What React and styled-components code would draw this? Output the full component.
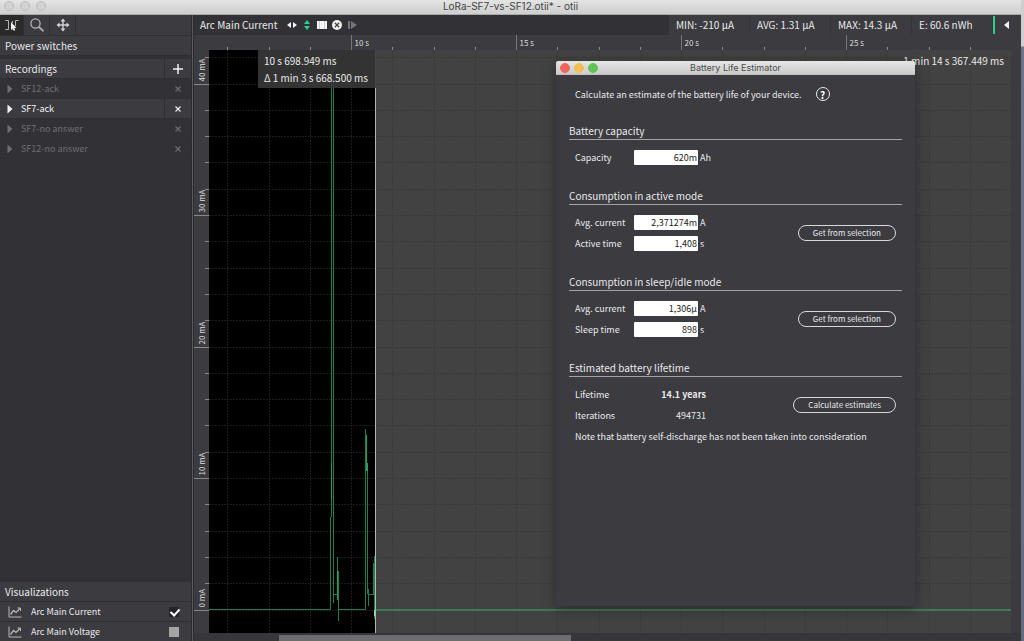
import React from "react";
import styled, { createGlobalStyle, css } from "styled-components";

const UI_FONT = `"Noto Sans CJK SC", "Noto Sans", sans-serif`;
const TITLE_FONT = `Inter, "Liberation Sans", sans-serif`;

const colors = {
  panel: "#3b3b40",
  dark: "#323236",
  divider: "#2f2f33",
  text: "#e9e9ea",
  muted: "#6e6e71",
  green: "#2ed285",
  trace: "#1b7f50",
};

const GlobalStyle = createGlobalStyle`
  * {
    box-sizing: border-box;
  }
  body {
    margin: 0;
    overflow: hidden;
    background: #6a7083;
    font-family: ${UI_FONT};
    font-size: 10px;
    color: ${colors.text};
  }
  button, input {
    font-family: inherit;
    font-size: inherit;
  }
  h2, h3, p {
    margin: 0;
    font-size: inherit;
    font-weight: 400;
  }
`;

const Desktop = styled.div`
  position: relative;
  height: 100vh;
  padding-right: 3px;
  background: linear-gradient(#cfcfcf 46px, #6c7488 47px, #666c80 100%);
`;

const Window = styled.div`
  height: 100%;
  display: flex;
  flex-direction: column;
  overflow: hidden;
  background: ${colors.panel};
`;

const TitleBar = styled.div`
  flex: none;
  height: 15px;
  display: grid;
  grid-template-columns: 1fr auto 1fr;
  align-items: center;
  padding: 0 4px 2px;
  background: linear-gradient(#e4e4e4, #cecece);
  border-bottom: 1px solid #a9a9a9;
  font-family: ${TITLE_FONT};
  font-size: 10px;
  line-height: 12px;
  color: #444;
`;

const Lights = styled.div`
  display: flex;
  gap: ${({ $gap }) => $gap}px;
`;

const Light = styled.span`
  width: 10px;
  height: 10px;
  border-radius: 50%;
  background: ${({ $color }) => $color};
  border: 1px solid ${({ $edge, $color }) => $edge || $color};
`;

const Columns = styled.div`
  flex: 1;
  min-height: 0;
  display: flex;
`;

/* ---------- sidebar ---------- */

const Sidebar = styled.aside`
  flex: none;
  width: 191px;
  display: flex;
  flex-direction: column;
  background: ${colors.dark};
`;

const Tools = styled.div`
  flex: none;
  display: flex;
  height: 21px;
  background: ${colors.panel};
  border-bottom: 1px solid ${colors.divider};
`;

const ToolButton = styled.button`
  width: ${({ $active }) => ($active ? 24 : 26)}px;
  padding: 0;
  border: 0;
  border-right: 1px solid ${colors.divider};
  display: flex;
  align-items: center;
  justify-content: center;
  color: #d4d4d6;
  background: ${({ $active }) => ($active ? "#2a2a2b" : "transparent")};
`;

const PanelHead = styled.div`
  flex: none;
  display: flex;
  align-items: center;
  height: 20px;
  padding-left: 5px;
  margin-bottom: ${({ $space }) => $space || 0}px;
  background: ${colors.panel};
  border-bottom: 1px solid ${colors.divider};

  h2 {
    flex: 1;
    line-height: 14px;
  }
`;

const SideButton = styled.button`
  align-self: stretch;
  width: 27px;
  padding: 0;
  border: 0;
  border-left: 1px solid ${({ $line }) => ($line ? colors.divider : "transparent")};
  display: flex;
  align-items: center;
  justify-content: center;
  color: inherit;
  background: none;
`;

const Recording = styled.div`
  flex: none;
  display: flex;
  align-items: center;
  height: 20px;
  padding-left: 7px;
  border-bottom: 1px solid #303034;
  color: ${colors.muted};
  font-size: 9px;

  span {
    flex: 1;
    padding-left: 8px;
    line-height: 14px;
  }

  ${({ $active }) =>
    $active &&
    css`
      color: #f4f4f4;
      background: ${colors.panel};
    `}
`;

const Spacer = styled.div`
  flex: 1;
`;

const Visualizations = styled.div`
  flex: none;
  height: 59px;
  overflow: hidden;
`;

const Visualization = styled.label`
  display: flex;
  align-items: center;
  height: 20px;
  padding: 0 12px 0 8px;
  background: ${colors.panel};
  border-bottom: 1px solid ${colors.divider};
  font-size: 9px;

  span {
    flex: 1;
    padding-left: 9px;
    line-height: 14px;
  }
`;

const Check = styled.input`
  appearance: none;
  width: 10px;
  height: 10px;
  margin: 0;
  background: #a5a5a5;

  &:checked {
    background: #242427;
  }
  &:checked::after {
    content: "";
    display: block;
    width: 4px;
    height: 7px;
    margin-left: 3px;
    border: solid #fff;
    border-width: 0 2px 2px 0;
    transform: rotate(42deg);
  }
`;

const Splitter = styled.div`
  flex: none;
  width: 3px;
  background: #5a5a5d;
  border-left: 1px solid #2c2c2f;
  border-right: 1px solid #2c2c2f;
`;

/* ---------- chart ---------- */

const Main = styled.main`
  flex: 1;
  min-width: 0;
  display: flex;
  flex-direction: column;
`;

const ChartHead = styled.div`
  flex: none;
  display: flex;
  align-items: stretch;
  height: 20px;
  background: ${colors.dark};
`;

const ChartTitle = styled.h2`
  align-self: center;
  padding: 0 9px 0 6px;
  line-height: 14px;
`;

const HeadIcons = styled.div`
  flex: 1;
  display: flex;
  align-items: center;
  gap: 3px;
`;

const IconButton = styled.button`
  width: 12px;
  height: 12px;
  padding: 0;
  border: 0;
  display: flex;
  background: none;
`;

const Stat = styled.div`
  flex: none;
  display: flex;
  align-items: center;
  width: 81px;
  padding-left: 7px;
  background: ${colors.panel};
  border-right: 1px solid #35353a;
  line-height: 14px;
  white-space: nowrap;
`;

const HeadEnd = styled.div`
  flex: none;
  width: 28px;
  display: flex;
  align-items: center;
  background: ${colors.panel};
`;

const Marker = styled.i`
  align-self: stretch;
  width: 2px;
  margin: 1px 8px 1px 0;
  background: ${colors.green};
`;

const ChartGrid = styled.div`
  flex: 1;
  min-height: 0;
  display: grid;
  grid-template: 15px 1fr / 15px 1fr 10px;
`;

const TimeAxis = styled.svg`
  grid-column: 2 / 4;
  width: 100%;
  height: 15px;
  display: block;
`;

const CurrentAxis = styled.svg`
  grid-column: 1;
  grid-row: 2;
  width: 15px;
  height: 100%;
  display: block;
`;

const Plot = styled.div`
  position: relative;
  grid-column: 2;
  grid-row: 2;
  min-height: 0;
  background: #424242;

  > svg {
    display: block;
    width: 100%;
    height: 100%;
  }
`;

const AxisText = styled.text`
  font-family: ${UI_FONT};
  font-size: 8px;
  fill: #dcdcdd;
`;

const Readout = styled.div`
  position: absolute;
  top: 0;
  left: 49px;
  width: 118px;
  padding: 2px 0 2px 6px;
  background: rgba(56, 56, 56, 0.9);
  line-height: 17px;
  white-space: nowrap;
`;

const TotalTime = styled.div`
  position: absolute;
  top: 2px;
  right: 7px;
  background: #424242;
  line-height: 17px;
`;

const ScrollTrack = styled.div`
  flex: none;
  height: 8px;
  padding: 2px 450px 0 85px;
  background: #37373b;
`;

const ScrollThumb = styled.div`
  height: 6px;
  background: #6d6d6e;
`;

/* ---------- estimator dialog ---------- */

const Dialog = styled.section`
  position: absolute;
  top: 61px;
  left: 556px;
  width: 359px;
  height: 545px;
  display: flex;
  flex-direction: column;
  background: #3b3b40;
  box-shadow: 0 3px 12px rgba(0, 0, 0, 0.35);
`;

const DialogBar = styled.div`
  flex: none;
  display: grid;
  grid-template-columns: 1fr auto 1fr;
  align-items: center;
  height: 14px;
  padding: 0 4px;
  background: linear-gradient(#e6e6e6, #cbcbcb);
  border-bottom: 1px solid #bdbdbd;
  border-radius: 2px 2px 0 0;
  font-family: ${TITLE_FONT};
  font-size: 9px;
  line-height: 12px;
  color: #4c4c4c;
`;

const DialogBody = styled.div`
  padding: 12px 13px;
`;

const Intro = styled.div`
  display: flex;
  align-items: center;
  gap: 14px;
  height: 14px;
  margin-bottom: 22px;
  padding-left: 6px;
  font-size: 9px;
`;

const HelpButton = styled.button`
  width: 14px;
  height: 14px;
  padding: 0;
  border: 1px solid #eee;
  border-radius: 50%;
  background: none;
  color: #fff;
  font-size: 10px;
  font-weight: 700;
  line-height: 11px;
`;

const Group = styled.div`
  margin-bottom: 23px;

  h3 {
    height: 17px;
    line-height: 16px;
    border-bottom: 1px solid #a2a2a4;
  }
`;

const GroupBody = styled.div`
  display: flex;
  align-items: center;
  justify-content: space-between;
  padding: 10px 6px 0;
`;

const Rows = styled.div`
  display: flex;
  flex-direction: column;
  gap: 6px;
  font-size: 9px;
`;

const Row = styled.div`
  display: flex;
  align-items: center;
  height: 15px;

  label, > span:first-child {
    width: 59px;
  }
`;

const NumberInput = styled.input`
  width: 64px;
  height: 15px;
  margin-right: 2px;
  padding: 0 1px;
  border: 0;
  border-radius: 1px;
  background: #fff;
  color: #1c1c1c;
  text-align: right;
`;

const Result = styled.output`
  width: 72px;
  text-align: right;
  font-weight: ${({ $bold }) => ($bold ? 700 : 400)};
`;

const Note = styled.p`
  padding: 6px 6px 0;
  font-size: 9px;
  line-height: 15px;
`;

const PillButton = styled.button`
  height: 16px;
  padding: 0 14px;
  border: 1px solid #d8d8da;
  border-radius: 8px;
  background: none;
  color: ${colors.text};
  font-size: 8px;
  line-height: 12px;
`;

const recordings = [
  { name: "SF12-ack" },
  { name: "SF7-ack", active: true },
  { name: "SF7-no answer" },
  { name: "SF12-no answer" },
];

const stats = ["MIN: -210 µA", "AVG: 1.31 µA", "MAX: 14.3 µA", "E: 60.6 nWh"];

// plot coordinates: 33px per second, 13.15px per mA
const timeX = (s) => Math.round(142 + (s - 10) * 33) + 0.5;
const currentY = (mA) => Math.round(559.5 - mA * 13.15) + 0.5;

const times = Array.from({ length: 19 }, (_, i) => 6.25 + i * 1.25);
const currents = Array.from({ length: 22 }, (_, i) => 42 - i * 2);
const SELECTION_END = 167;

const PlayTriangle = () => (
  <svg width="6" height="10" viewBox="0 0 6 10">
    <path d="M0.5 0.5 L5.5 5 L0.5 9.5 Z" fill="currentColor" />
  </svg>
);

const Cross = () => (
  <svg width="6" height="6" viewBox="0 0 6 6">
    <path d="M0.5 0.5 L5.5 5.5 M5.5 0.5 L0.5 5.5" stroke="currentColor" strokeWidth="1.1" />
  </svg>
);

const LineChartIcon = () => (
  <svg width="14" height="12" viewBox="0 0 14 12" fill="none" stroke="#b8b8ba">
    <path d="M1 0.5 V11 H13.5" strokeWidth="1" />
    <path d="M2.5 8.5 L5.5 4.5 L8 6.5 L12 2.5" strokeWidth="1.3" />
    <path d="M9.5 2 H12.5 V5" strokeWidth="1" />
  </svg>
);

const TimeRuler = () => (
  <TimeAxis>
    {times.map((t) => {
      const major = t % 5 === 0;
      return (
        <g key={t}>
          <line x1={timeX(t)} x2={timeX(t)} y1={major ? 0 : 12} y2="15" stroke={major ? "#77777a" : "#8b8b8e"} />
          {major && (
            <AxisText x={timeX(t) + 3} y="11">
              {t} s
            </AxisText>
          )}
        </g>
      );
    })}
  </TimeAxis>
);

const CurrentRuler = () => (
  <CurrentAxis>
    {currents.map((mA) => {
      const y = currentY(mA);
      const major = mA % 10 === 0;
      return (
        <g key={mA}>
          <line x1={major ? 0 : 11} x2="15" y1={y} y2={y} stroke="#88888b" />
          {major && (
            <AxisText transform={`translate(11 ${y - 3}) rotate(-90)`}>{mA} mA</AxisText>
          )}
        </g>
      );
    })}
  </CurrentAxis>
);

const GridLines = ({ stroke, offset = 0 }) => (
  <g stroke={stroke} strokeDasharray="2 1">
    {times.map((t) => (
      <line key={t} x1={timeX(t) - offset} x2={timeX(t) - offset} y1="0" y2="100%" />
    ))}
    {currents.map((mA) => (
      <line key={mA} x1="0" x2="100%" y1={currentY(mA)} y2={currentY(mA)} />
    ))}
  </g>
);

const Trace = () => (
  <g fill="none" stroke={colors.trace}>
    <path d="M0 559.5 H121.5 V467 M122.5 467 V22 L123.5 17 L124.5 22 V540" />
    <path d="M122.5 449 V413" stroke="#23a067" />
    <path d="M124.5 540 V553 M125 544.5 H128.5 V507 M129.5 571 V521" />
    <path d="M128.5 521 V550" stroke="#23a067" />
    <path d="M129.5 559.5 H156.5 V379 M158.5 413 V544" />
    <path d="M157.5 385 V421 M158.5 413 V421" stroke="#23a067" />
    <path d="M159.5 539 V556 M159.5 544.5 H165.5 M164.5 513 V544 M165.5 506 V569" />
    <path d="M165.5 560 V566" stroke="#5dffae" />
  </g>
);

const ChartPlot = () => (
  <Plot>
    <svg>
      <rect width={SELECTION_END} height="100%" fill="#000" />
      <GridLines stroke="#1c1c1c" />
      <svg x={SELECTION_END} overflow="hidden">
        <rect width="100%" height="100%" fill="#424242" />
        <GridLines stroke="#393939" offset={SELECTION_END} />
        <line x1="0" x2="100%" y1="560" y2="560" stroke="#3b7a59" strokeWidth="2" />
      </svg>
      <Trace />
      <line x1="166.5" x2="166.5" y1="0" y2="100%" stroke="#b5b5b5" />
    </svg>
    <Readout>
      <div>10 s 698.949 ms</div>
      <div>Δ 1 min 3 s 668.500 ms</div>
    </Readout>
    <TotalTime>1 min 14 s 367.449 ms</TotalTime>
  </Plot>
);

const Field = ({ id, label, value, unit }) => (
  <Row>
    <label htmlFor={id}>{label}</label>
    <NumberInput id={id} type="text" defaultValue={value} />
    <span>{unit}</span>
  </Row>
);

const EstimatorDialog = () => (
  <Dialog role="dialog" aria-labelledby="estimator-title">
    <DialogBar>
      <Lights $gap={4}>
        <Light $color="#f0645a" />
        <Light $color="#f6be4f" />
        <Light $color="#5fc454" />
      </Lights>
      <span id="estimator-title">Battery Life Estimator</span>
    </DialogBar>
    <DialogBody>
      <Intro>
        <p>Calculate an estimate of the battery life of your device.</p>
        <HelpButton type="button">?</HelpButton>
      </Intro>
      <Group>
        <h3>Battery capacity</h3>
        <GroupBody>
          <Rows>
            <Field id="capacity" label="Capacity" value="620m" unit="Ah" />
          </Rows>
        </GroupBody>
      </Group>
      <Group>
        <h3>Consumption in active mode</h3>
        <GroupBody>
          <Rows>
            <Field id="active-current" label="Avg. current" value="2,371274m" unit="A" />
            <Field id="active-time" label="Active time" value="1,408" unit="s" />
          </Rows>
          <PillButton type="button">Get from selection</PillButton>
        </GroupBody>
      </Group>
      <Group>
        <h3>Consumption in sleep/idle mode</h3>
        <GroupBody>
          <Rows>
            <Field id="sleep-current" label="Avg. current" value="1,306µ" unit="A" />
            <Field id="sleep-time" label="Sleep time" value="898" unit="s" />
          </Rows>
          <PillButton type="button">Get from selection</PillButton>
        </GroupBody>
      </Group>
      <Group>
        <h3>Estimated battery lifetime</h3>
        <GroupBody>
          <Rows>
            <Row>
              <span>Lifetime</span>
              <Result $bold>14.1 years</Result>
            </Row>
            <Row>
              <span>Iterations</span>
              <Result>494731</Result>
            </Row>
          </Rows>
          <PillButton type="button">Calculate estimates</PillButton>
        </GroupBody>
        <Note>Note that battery self-discharge has not been taken into consideration</Note>
      </Group>
    </DialogBody>
  </Dialog>
);

const App = () => {
  return (
    <Desktop>
      <GlobalStyle />
      <Window>
        <TitleBar>
          <Lights $gap={6}>
            <Light $color="#d2d2d2" $edge="#bcbcbc" />
            <Light $color="#d2d2d2" $edge="#bcbcbc" />
            <Light $color="#d2d2d2" $edge="#bcbcbc" />
          </Lights>
          <span>LoRa-SF7-vs-SF12.otii* - otii</span>
        </TitleBar>
        <Columns>
          <Sidebar>
            <Tools>
              <ToolButton type="button" aria-label="Select" $active>
                <svg width="14" height="14" viewBox="0 0 14 14" fill="none" stroke="#b4b4b4">
                  <path d="M0.5 2.5 H3.5 V11.5 H0.5" />
                  <path d="M13.5 2.5 H10.5 V8 M7.5 5 V3 M7.5 11.5 H9" />
                  <path d="M6 4 V12 L7.8 10.6 L8.8 12.8 L10.2 12.2 L9.3 10 H11.5 Z" fill="#f2f2f2" stroke="none" />
                </svg>
              </ToolButton>
              <ToolButton type="button" aria-label="Zoom">
                <svg width="14" height="14" viewBox="0 0 14 14" fill="none" stroke="#b4b4b6">
                  <circle cx="5.5" cy="5.5" r="4.6" strokeWidth="1.3" />
                  <path d="M8.8 8.8 L13.5 13.2" strokeWidth="1.8" />
                </svg>
              </ToolButton>
              <ToolButton type="button" aria-label="Pan">
                <svg width="14" height="14" viewBox="0 0 14 14" fill="currentColor">
                  <path d="M7 0.5 L9.5 3.5 H7.7 V6.3 H10.5 V4.5 L13.5 7 L10.5 9.5 V7.7 H7.7 V10.5 H9.5 L7 13.5 L4.5 10.5 H6.3 V7.7 H3.5 V9.5 L0.5 7 L3.5 4.5 V6.3 H6.3 V3.5 H4.5 Z" />
                </svg>
              </ToolButton>
            </Tools>
            <PanelHead $space={3}>
              <h2>Power switches</h2>
            </PanelHead>
            <PanelHead>
              <h2>Recordings</h2>
              <SideButton type="button" aria-label="Add recording" $line>
                <svg width="10" height="10" viewBox="0 0 10 10">
                  <path d="M5 0 V10 M0 5 H10" stroke="#f2f2f2" strokeWidth="1.5" />
                </svg>
              </SideButton>
            </PanelHead>
            {recordings.map((rec) => (
              <Recording key={rec.name} $active={rec.active}>
                <PlayTriangle />
                <span>{rec.name}</span>
                <SideButton type="button" aria-label={`Remove ${rec.name}`} $line={rec.active}>
                  <Cross />
                </SideButton>
              </Recording>
            ))}
            <Spacer />
            <Visualizations>
              <PanelHead>
                <h2>Visualizations</h2>
              </PanelHead>
              <Visualization>
                <LineChartIcon />
                <span>Arc Main Current</span>
                <Check type="checkbox" defaultChecked />
              </Visualization>
              <Visualization>
                <LineChartIcon />
                <span>Arc Main Voltage</span>
                <Check type="checkbox" />
              </Visualization>
            </Visualizations>
          </Sidebar>
          <Splitter />
          <Main>
            <ChartHead>
              <ChartTitle>Arc Main Current</ChartTitle>
              <HeadIcons>
                <IconButton type="button" aria-label="Fit horizontally">
                  <svg width="12" height="12" viewBox="0 0 12 12" fill="#f2f2f2">
                    <path d="M5 3 V9 L1 6 Z M7 3 V9 L11 6 Z" />
                  </svg>
                </IconButton>
                <IconButton type="button" aria-label="Fit vertically">
                  <svg width="12" height="12" viewBox="0 0 12 12" fill="#22d596">
                    <path d="M3 5 H9 L6 1 Z M3 7 H9 L6 11 Z" />
                  </svg>
                </IconButton>
                <IconButton type="button" aria-label="Show selection">
                  <svg width="12" height="12" viewBox="0 0 12 12" fill="#f6f6f6">
                    <path d="M1 2 H11 V10 H1 Z" />
                    <path d="M3.5 2 V10 M8.5 2 V10" stroke="#cfcfcf" strokeWidth="1" />
                  </svg>
                </IconButton>
                <IconButton type="button" aria-label="Clear">
                  <svg width="12" height="12" viewBox="0 0 12 12">
                    <circle cx="6" cy="6" r="5" fill="#f2f2f2" />
                    <path d="M3.8 3.8 L8.2 8.2 M8.2 3.8 L3.8 8.2" stroke="#444" strokeWidth="1.3" />
                  </svg>
                </IconButton>
                <IconButton type="button" aria-label="Follow">
                  <svg width="12" height="12" viewBox="0 0 12 12" fill="#77777a">
                    <path d="M2 2 H4 V10 H2 Z M5 2 L11 6 L5 10 Z" />
                  </svg>
                </IconButton>
              </HeadIcons>
              {stats.map((s) => (
                <Stat key={s}>{s}</Stat>
              ))}
              <HeadEnd>
                <Marker />
                <IconButton type="button" aria-label="Collapse">
                  <svg width="12" height="12" viewBox="0 0 12 12" fill="#f2f2f2">
                    <path d="M6 2 V10 L1 6 Z" />
                  </svg>
                </IconButton>
              </HeadEnd>
            </ChartHead>
            <ChartGrid>
              <TimeRuler />
              <CurrentRuler />
              <ChartPlot />
            </ChartGrid>
            <ScrollTrack>
              <ScrollThumb />
            </ScrollTrack>
          </Main>
        </Columns>
        <EstimatorDialog />
      </Window>
    </Desktop>
  );
};

export default App;
